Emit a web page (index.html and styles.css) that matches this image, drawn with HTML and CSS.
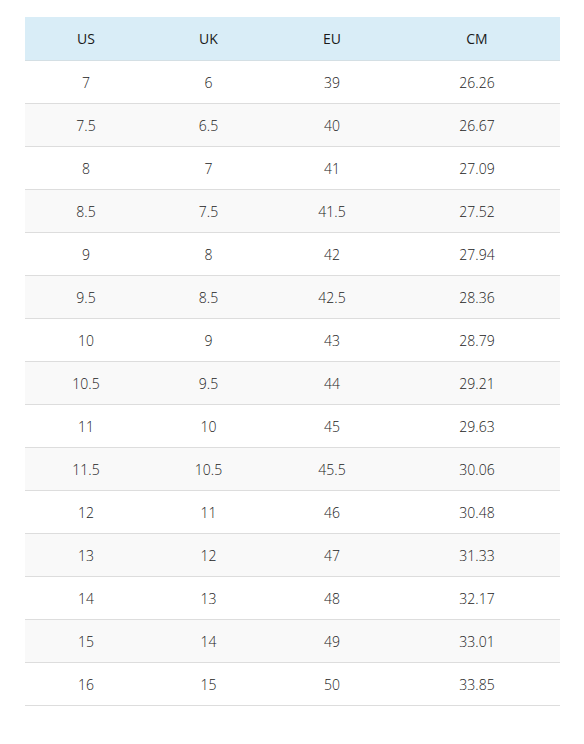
FILE: index.html
```html
<!DOCTYPE html>
<html>
<head>
<meta charset="utf-8">
<link rel="stylesheet" href="styles.css">
</head>
<body>
<div class="wrap">
<table class="size-table">
<colgroup><col class="c1"><col class="c2"><col class="c3"><col class="c4"></colgroup>
<thead><tr><th>US</th><th>UK</th><th>EU</th><th>CM</th></tr></thead>
<tbody>
<tr><td>7</td><td>6</td><td>39</td><td>26.26</td></tr>
<tr><td>7.5</td><td>6.5</td><td>40</td><td>26.67</td></tr>
<tr><td>8</td><td>7</td><td>41</td><td>27.09</td></tr>
<tr><td>8.5</td><td>7.5</td><td>41.5</td><td>27.52</td></tr>
<tr><td>9</td><td>8</td><td>42</td><td>27.94</td></tr>
<tr><td>9.5</td><td>8.5</td><td>42.5</td><td>28.36</td></tr>
<tr><td>10</td><td>9</td><td>43</td><td>28.79</td></tr>
<tr><td>10.5</td><td>9.5</td><td>44</td><td>29.21</td></tr>
<tr><td>11</td><td>10</td><td>45</td><td>29.63</td></tr>
<tr><td>11.5</td><td>10.5</td><td>45.5</td><td>30.06</td></tr>
<tr><td>12</td><td>11</td><td>46</td><td>30.48</td></tr>
<tr><td>13</td><td>12</td><td>47</td><td>31.33</td></tr>
<tr><td>14</td><td>13</td><td>48</td><td>32.17</td></tr>
<tr><td>15</td><td>14</td><td>49</td><td>33.01</td></tr>
<tr><td>16</td><td>15</td><td>50</td><td>33.85</td></tr>
</tbody>
</table>
</div>
</body>
</html>
```
FILE: styles.css
```css
html, body { margin: 0; padding: 0; background: #fff; }
body { font-family: "Open Sans", "Liberation Sans", sans-serif; color: #333; }
.wrap { padding: 17px 24px 0 25px; }
.size-table { width: 535px; border-collapse: collapse; table-layout: fixed; }
.c1 { width: 122px; }
.c2 { width: 123px; }
.c3 { width: 124px; }
.c4 { width: 166px; }
.size-table th {
  background: #d9edf7;
  height: 43px;
  padding: 0;
  font-weight: 400;
  font-size: 14px;
  color: #1a1a1a;
  text-align: center;
  vertical-align: middle;
  border-bottom: 1px solid #d4dfe4;
}
.size-table td {
  height: 42px;
  padding: 0;
  font-weight: 300;
  font-size: 14px;
  color: #222;
  text-align: center;
  vertical-align: middle;
  border-bottom: 1px solid #dddddd;
}
.size-table tbody tr:nth-child(even) td { background: #f9f9f9; }
```
